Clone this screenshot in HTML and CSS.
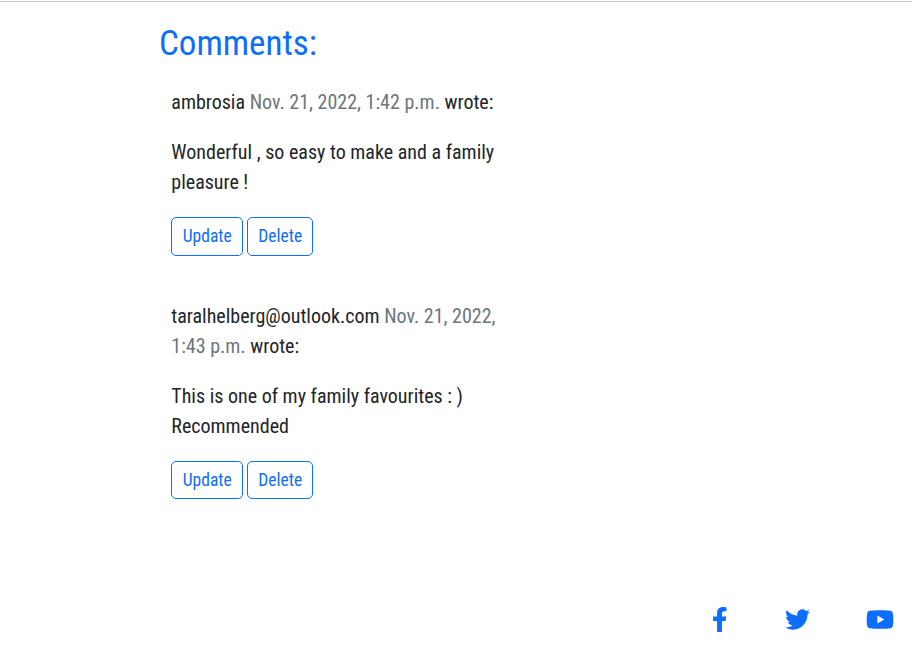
FILE: index.html
```html
<!DOCTYPE html>
<html lang="en">
<head>
<meta charset="utf-8">
<title>Comments</title>
<link rel="stylesheet" href="styles.css">
</head>
<body>
<main class="comments">
  <h3 class="title">Comments:</h3>
  <article class="comment">
    <p class="line">ambrosia <span class="muted">Nov. 21, 2022, 1:42 p.m.</span> wrote:</p>
    <p class="line">Wonderful , so easy to make and a family<br>pleasure !</p>
    <div class="actions"><a class="btn update">Update</a><a class="btn delete">Delete</a></div>
  </article>
  <article class="comment">
    <p class="line">taralhelberg@outlook.com <span class="muted">Nov. 21, 2022,<br>1:43 p.m.</span> wrote:</p>
    <p class="line">This is one of my family favourites : )<br>Recommended</p>
    <div class="actions"><a class="btn update">Update</a><a class="btn delete">Delete</a></div>
  </article>
</main>
<footer class="social">
  <svg class="facebook" viewBox="0 0 320 512"><path d="M279.14 288l14.22-92.66h-88.91v-60.13c0-25.35 12.42-50.06 52.24-50.06h40.42V6.26S260.43 0 225.36 0c-73.22 0-121.08 44.38-121.08 124.72v70.62H22.89V288h81.39v224h100.17V288z"/></svg>
  <svg class="twitter" viewBox="0 0 512 512"><path d="M459.37 151.716c.325 4.548.325 9.097.325 13.645 0 138.72-105.583 298.558-298.558 298.558-59.452 0-114.68-17.219-161.137-47.106 8.447.974 16.568 1.299 25.34 1.299 49.055 0 94.213-16.568 130.274-44.832-46.132-.975-84.792-31.188-98.112-72.772 6.498.974 12.995 1.624 19.818 1.624 9.421 0 18.843-1.3 27.614-3.573-48.081-9.747-84.143-51.98-84.143-102.985v-1.299c13.969 7.797 30.214 12.67 47.431 13.319-28.264-18.843-46.781-51.005-46.781-87.391 0-19.492 5.197-37.36 14.294-52.954 51.655 63.675 129.3 105.258 216.365 109.807-1.624-7.797-2.599-15.918-2.599-24.04 0-57.828 46.782-104.934 104.934-104.934 30.213 0 57.502 12.67 76.67 33.137 23.715-4.548 46.456-13.32 66.599-25.34-7.798 24.366-24.366 44.833-46.132 57.827 21.117-2.273 41.584-8.122 60.426-16.243-14.292 20.791-32.161 39.308-52.628 54.253z"/></svg>
  <svg class="youtube" viewBox="0 0 576 512"><path d="M549.655 124.083c-6.281-23.65-24.787-42.276-48.284-48.597C458.781 64 288 64 288 64S117.22 64 74.629 75.486c-23.497 6.322-42.003 24.947-48.284 48.597-11.412 42.867-11.412 132.305-11.412 132.305s0 89.438 11.412 132.305c6.281 23.65 24.787 41.5 48.284 47.821C117.22 448 288 448 288 448s170.78 0 213.371-11.486c23.497-6.321 42.003-24.171 48.284-47.821 11.412-42.867 11.412-132.305 11.412-132.305s0-89.438-11.412-132.305zm-317.51 213.508V175.185l142.739 81.205-142.739 81.201z"/></svg>
</footer>
</body>
</html>
```
FILE: styles.css
```css
* { box-sizing: border-box; }
body {
  margin: 0;
  height: 646px;
  overflow: hidden;
  border-top: 1px solid #fff;
  background: #fff;
  color: #212529;
  font: 20px/30px "Roboto Condensed", Roboto, "Liberation Sans", sans-serif;
  font-stretch: 75%;
  display: flex;
  flex-direction: column;
}
body::before { content: ""; flex: none; height: 1px; background: #c8c8c8; }
.comments { padding: 21px 0 0 159px; }
.title { margin: 0; height: 64px; font-size: 35px; font-weight: 400; line-height: 42px; color: #0d6efd; }
.comment { height: 214px; padding-left: 12px; }
.comment + .comment { height: 244px; }
.line { margin: 0 0 20px; padding-left: .3px; white-space: nowrap; }
.muted { color: #6c757d; }
.actions { display: flex; gap: 4px; }
.btn { display: flex; justify-content: center; align-items: center; height: 39px; padding: 0 0 1px .5px; border: 1px solid #0d6efd; border-radius: 5px; color: #0d6efd; font-size: 17.5px; }
.comment + .comment .btn { height: 38px; }
.update { width: 72px; }
.delete { width: 66px; }
.social { margin-top: auto; height: 53px; padding: 14px 17.6px 0 0; display: flex; justify-content: flex-end; fill: #0d6efd; }
.social svg { height: 25px; }
.facebook { width: 15.6px; margin-right: 57.3px; }
.twitter { width: 25px; margin-right: 56.7px; }
.youtube { width: 28.1px; }
```
